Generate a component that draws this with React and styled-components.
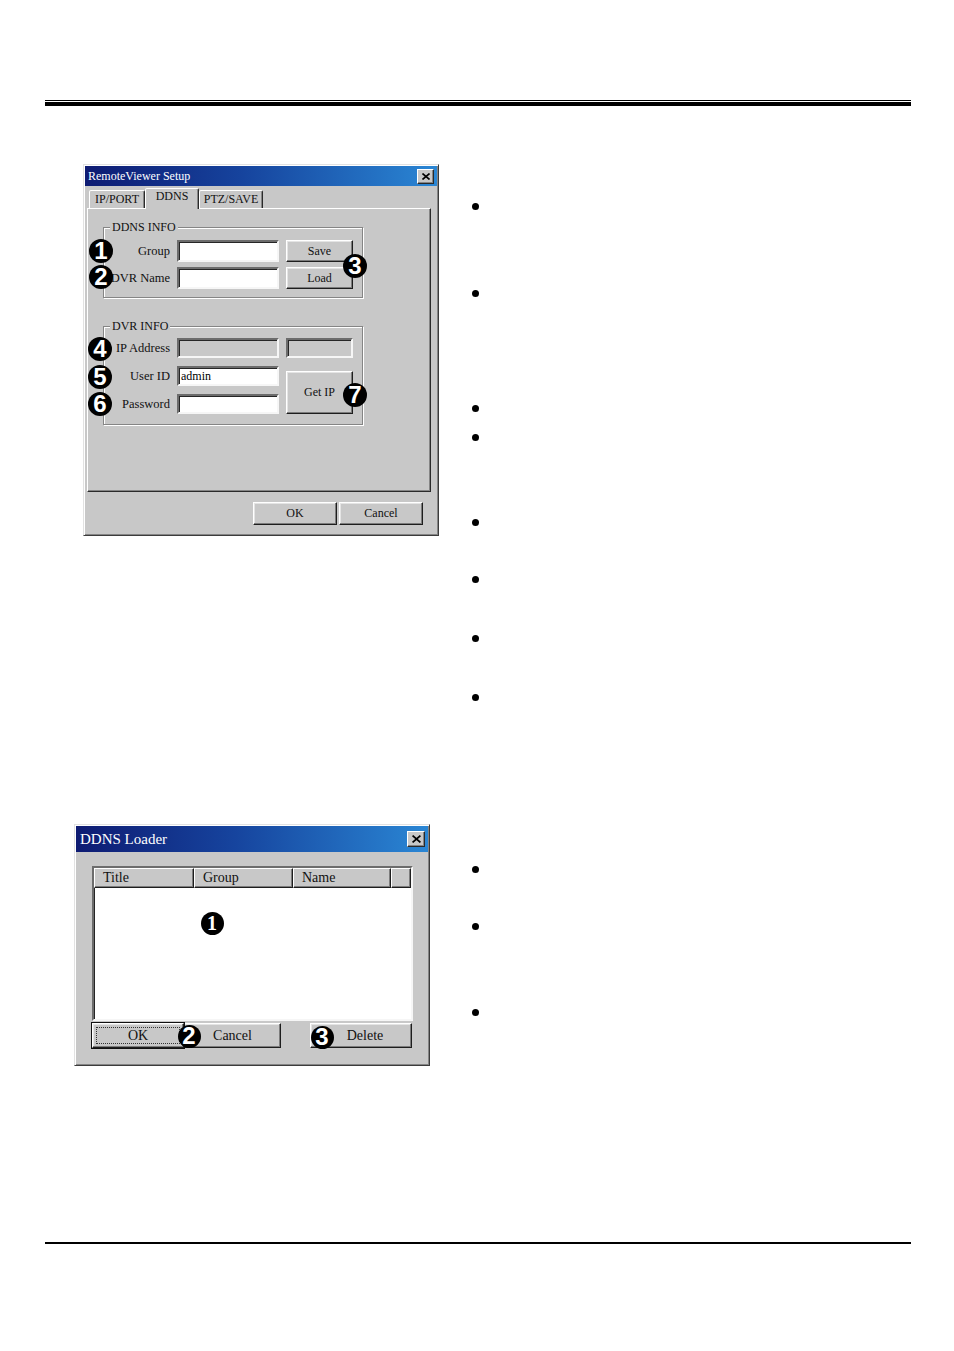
import React from "react";
import styled, { createGlobalStyle } from "styled-components";

const GlobalStyle = createGlobalStyle`
  html, body {
    margin: 0;
    padding: 0;
    background: #fff;
  }
  body {
    font-family: "Liberation Serif", "DejaVu Serif", serif;
  }
`;

const GREY = "#c8c8c8";

const Page = styled.div`
  width: 954px;
  height: 1351px;
  padding-top: 100px;
  box-sizing: border-box;
  display: flex;
  flex-direction: column;
`;

const HeaderRule = styled.div`
  margin: 0 43px 0 45px;
  height: 1px;
  border-top: 1px solid #000;
  border-bottom: 4px solid #000;
`;

const FooterRule = styled.div`
  margin: 176px 43px 0 45px;
  height: 2px;
  background: #000;
`;

const Section = styled.section`
  display: flex;
  align-items: flex-start;
  height: ${(p) => p.$h}px;
  margin-top: ${(p) => p.$top}px;
`;

const Window = styled.div`
  position: relative;
  flex: none;
  margin-left: ${(p) => p.$left}px;
  width: ${(p) => p.$w}px;
  height: ${(p) => p.$h}px;
  box-sizing: border-box;
  padding: 1px;
  background: ${GREY};
  border: 1px solid;
  border-color: #e2e2e2 #3c3c3c #3c3c3c #e2e2e2;
  box-shadow: inset 1px 1px 0 #fff, inset -1px -1px 0 #858585;
  display: flex;
  flex-direction: column;
`;

const TitleBar = styled.div`
  height: ${(p) => p.$h}px;
  flex: none;
  display: flex;
  align-items: center;
  justify-content: space-between;
  padding: 0 3px 0 ${(p) => p.$pl}px;
  background: linear-gradient(to right, #0e1b72 0%, #16449e 45%, #2a86d4 100%);
  color: #fff;
  font-size: ${(p) => p.$fs}px;
`;

const CloseButton = styled.div`
  width: ${(p) => p.$w}px;
  height: ${(p) => p.$h}px;
  box-sizing: border-box;
  background: ${GREY};
  border: 1px solid;
  border-color: #fff #2a2a2a #2a2a2a #fff;
  box-shadow: inset -1px -1px 0 #858585;
  display: flex;
  align-items: center;
  justify-content: center;
`;

const TabStrip = styled.div`
  display: flex;
  align-items: flex-end;
  height: 19px;
  margin-top: 3px;
  padding-left: 4px;
`;

const Tab = styled.div`
  position: relative;
  width: ${(p) => p.$w}px;
  height: ${(p) => (p.$active ? 21 : 18)}px;
  margin-bottom: ${(p) => (p.$active ? -1 : 0)}px;
  z-index: ${(p) => (p.$active ? 1 : 0)};
  box-sizing: border-box;
  background: ${GREY};
  border: 1px solid;
  border-bottom: none;
  border-color: #fff #2a2a2a transparent #fff;
  border-radius: 2px 2px 0 0;
  box-shadow: inset -1px 0 0 #858585;
  font-size: 12px;
  line-height: ${(p) => (p.$active ? 15 : 17)}px;
  text-align: center;
  color: #111;
`;

const Panel = styled.div`
  margin-left: 2px;
  width: 344px;
  height: 284px;
  box-sizing: border-box;
  border: 1px solid;
  border-color: #fff #2a2a2a #2a2a2a #fff;
  box-shadow: inset -1px -1px 0 #858585;
  padding: 11px 0 0 15px;
  display: flex;
  flex-direction: column;
  gap: 21px;
`;

const GroupBox = styled.fieldset`
  margin: 0;
  width: 260px;
  box-sizing: border-box;
  border: 1px solid #858585;
  box-shadow: inset 1px 1px 0 #fff, 1px 1px 0 #fff;
  padding: ${(p) => p.$pt}px 9px ${(p) => p.$pb}px 6px;
  min-width: 0;
`;

const Legend = styled.legend`
  padding: 0 2px;
  font-size: 12px;
  line-height: 14px;
  background: ${GREY};
  color: #111;
`;

const FormGrid = styled.div`
  display: grid;
  grid-template-columns: 60px 102px 67px;
  grid-auto-rows: ${(p) => p.$row}px;
  column-gap: 7px;
  row-gap: ${(p) => p.$gap}px;
`;

const Label = styled.label`
  align-self: center;
  justify-self: end;
  font-size: 12.5px;
  color: #111;
  white-space: nowrap;
`;

const TextBox = styled.input`
  width: 100%;
  height: 100%;
  box-sizing: border-box;
  margin: 0;
  padding: 0 2px;
  background: ${(p) => (p.disabled ? GREY : "#fff")};
  border: 2px solid;
  border-color: #6c6c6c #f6f6f6 #f6f6f6 #6c6c6c;
  box-shadow: inset 1px 1px 0 #262626;
  font-family: "Liberation Serif", serif;
  font-size: 12px;
  color: #000;
  outline: none;
`;

const Button = styled.button`
  width: ${(p) => p.$w}px;
  height: ${(p) => p.$h}px;
  margin: 0 0 0 ${(p) => p.$ml || 0}px;
  padding: 0 0 0 ${(p) => p.$pl || 0}px;
  box-sizing: border-box;
  align-self: ${(p) => p.$align || "stretch"};
  grid-column: ${(p) => p.$col || "auto"};
  grid-row: ${(p) => p.$row || "auto"};
  background: ${GREY};
  border: 1px solid;
  border-color: #fff #1e1e1e #1e1e1e #fff;
  box-shadow: inset -1px -1px 0 #7c7c7c, inset 1px 1px 0 #e4e4e4;
  font-family: "Liberation Serif", serif;
  font-size: ${(p) => p.$fs || 12}px;
  color: #111;
`;

const DefaultButton = styled(Button)`
  position: relative;
  outline: 1px solid #111;
  outline-offset: 0;
  &::after {
    content: "";
    position: absolute;
    inset: 3px;
    border: 1px dotted #333;
  }
`;

const ButtonRow = styled.div`
  display: flex;
  justify-content: ${(p) => p.$justify || "flex-end"};
  gap: ${(p) => p.$gap}px;
  margin-top: ${(p) => p.$mt}px;
  padding: 0 ${(p) => p.$pr}px 0 ${(p) => p.$pl}px;
`;

const Badge = styled.span`
  position: absolute;
  left: ${(p) => p.$x - p.$d / 2}px;
  top: ${(p) => p.$y - p.$d / 2}px;
  width: ${(p) => p.$d}px;
  height: ${(p) => p.$d}px;
  border-radius: 50%;
  background: #000;
  color: #fff;
  display: flex;
  align-items: center;
  justify-content: center;
  font-family: ${(p) => (p.$serif ? '"Liberation Serif", serif' : '"Liberation Sans", Arial, sans-serif')};
  font-weight: 700;
  font-size: ${(p) => (p.$serif ? 20 : 24)}px;
  line-height: 1;
  z-index: 5;
`;

const ListView = styled.div`
  margin: 14px 0 0 16px;
  width: 321px;
  height: 155px;
  box-sizing: border-box;
  background: #fff;
  border: 2px solid;
  border-color: #6c6c6c #f6f6f6 #f6f6f6 #6c6c6c;
  box-shadow: inset 1px 1px 0 #262626;
`;

const ListHeader = styled.div`
  display: grid;
  grid-template-columns: 100px 99px 98px 1fr;
  height: 20px;
`;

const HeaderCell = styled.div`
  box-sizing: border-box;
  background: ${GREY};
  border: 1px solid;
  border-color: #fff #1e1e1e #1e1e1e #fff;
  box-shadow: inset -1px -1px 0 #7c7c7c;
  padding-left: 8px;
  font-size: 14px;
  line-height: 18px;
  color: #111;
`;

const Bullets = styled.ul`
  list-style: none;
  margin: 0 0 0 ${(p) => p.$left}px;
  padding: 0;
  display: flex;
  flex-direction: column;
`;

const Dot = styled.li`
  width: 7px;
  height: 7px;
  border-radius: 50%;
  background: #000;
  margin-top: ${(p) => p.$mt}px;
`;

const CloseIcon = ({ size = 8 }) => (
  <svg width={size} height={size - 1} viewBox="0 0 8 7">
    <path d="M0.5 0.5 L7.5 6.5 M7.5 0.5 L0.5 6.5" stroke="#000" strokeWidth="1.6" />
  </svg>
);

const BulletColumn = ({ left, centers }) => (
  <Bullets $left={left}>
    {centers.map((c, i) => (
      <Dot key={i} $mt={i === 0 ? c - 3.5 : c - centers[i - 1] - 7} />
    ))}
  </Bullets>
);

const SetupDialog = () => (
  <Window $left={83} $w={356} $h={372}>
    <TitleBar $h={20} $pl={3} $fs={12}>
      <span>RemoteViewer Setup</span>
      <CloseButton $w={17} $h={15}>
        <CloseIcon />
      </CloseButton>
    </TitleBar>
    <TabStrip>
      <Tab $w={56}>IP/PORT</Tab>
      <Tab $w={54} $active>DDNS</Tab>
      <Tab $w={64}>PTZ/SAVE</Tab>
    </TabStrip>
    <Panel>
      <GroupBox $pt={6} $pb={8}>
        <Legend>DDNS INFO</Legend>
        <FormGrid $row={22} $gap={5}>
          <Label>Group</Label>
          <TextBox readOnly value="" />
          <Button $w={67} $h={22}>Save</Button>
          <Label>DVR Name</Label>
          <TextBox readOnly value="" />
          <Button $w={67} $h={22}>Load</Button>
        </FormGrid>
      </GroupBox>
      <GroupBox $pt={5} $pb={10}>
        <Legend>DVR INFO</Legend>
        <FormGrid $row={20} $gap={8}>
          <Label>IP Address</Label>
          <TextBox disabled value="" readOnly />
          <TextBox disabled value="" readOnly />
          <Label>User ID</Label>
          <TextBox readOnly value="admin" />
          <Button $w={67} $h={43} $col="3" $row="2 / 4" $align="end">
            Get IP
          </Button>
          <Label>Password</Label>
          <TextBox readOnly value="" />
        </FormGrid>
      </GroupBox>
    </Panel>
    <ButtonRow $gap={2} $mt={10} $pr={14} $pl={0}>
      <Button $w={84} $h={23}>OK</Button>
      <Button $w={84} $h={23}>Cancel</Button>
    </ButtonRow>
    <Badge $x={17} $y={86} $d={24}>1</Badge>
    <Badge $x={17} $y={112} $d={24}>2</Badge>
    <Badge $x={271} $y={101} $d={24}>3</Badge>
    <Badge $x={16} $y={184} $d={24}>4</Badge>
    <Badge $x={16} $y={212} $d={24}>5</Badge>
    <Badge $x={16} $y={239} $d={24}>6</Badge>
    <Badge $x={271} $y={230} $d={24}>7</Badge>
  </Window>
);

const LoaderDialog = () => (
  <Window $left={74} $w={356} $h={242}>
    <TitleBar $h={26} $pl={4} $fs={15}>
      <span>DDNS Loader</span>
      <CloseButton $w={18} $h={16}>
        <CloseIcon size={9} />
      </CloseButton>
    </TitleBar>
    <ListView>
      <ListHeader>
        <HeaderCell>Title</HeaderCell>
        <HeaderCell>Group</HeaderCell>
        <HeaderCell>Name</HeaderCell>
        <HeaderCell />
      </ListHeader>
    </ListView>
    <ButtonRow $justify="flex-start" $gap={0} $mt={2} $pr={0} $pl={16}>
      <DefaultButton $w={92} $h={25} $fs={14}>OK</DefaultButton>
      <Button $w={97} $h={25} $fs={14}>Cancel</Button>
      <Button $w={102} $h={25} $fs={14} $ml={29} $pl={8}>Delete</Button>
    </ButtonRow>
    <Badge $x={137} $y={98} $d={23} $serif>1</Badge>
    <Badge $x={114} $y={211} $d={23}>2</Badge>
    <Badge $x={247} $y={212} $d={23}>3</Badge>
  </Window>
);

export default function App() {
  return (
    <>
      <GlobalStyle />
      <Page>
        <HeaderRule />
        <Section $top={58} $h={660}>
          <SetupDialog />
          <BulletColumn left={33} centers={[42, 129, 244, 273, 358, 415, 474, 533]} />
        </Section>
        <Section $top={0} $h={242}>
          <LoaderDialog />
          <BulletColumn left={42} centers={[45, 102, 188]} />
        </Section>
        <FooterRule />
      </Page>
    </>
  );
}
